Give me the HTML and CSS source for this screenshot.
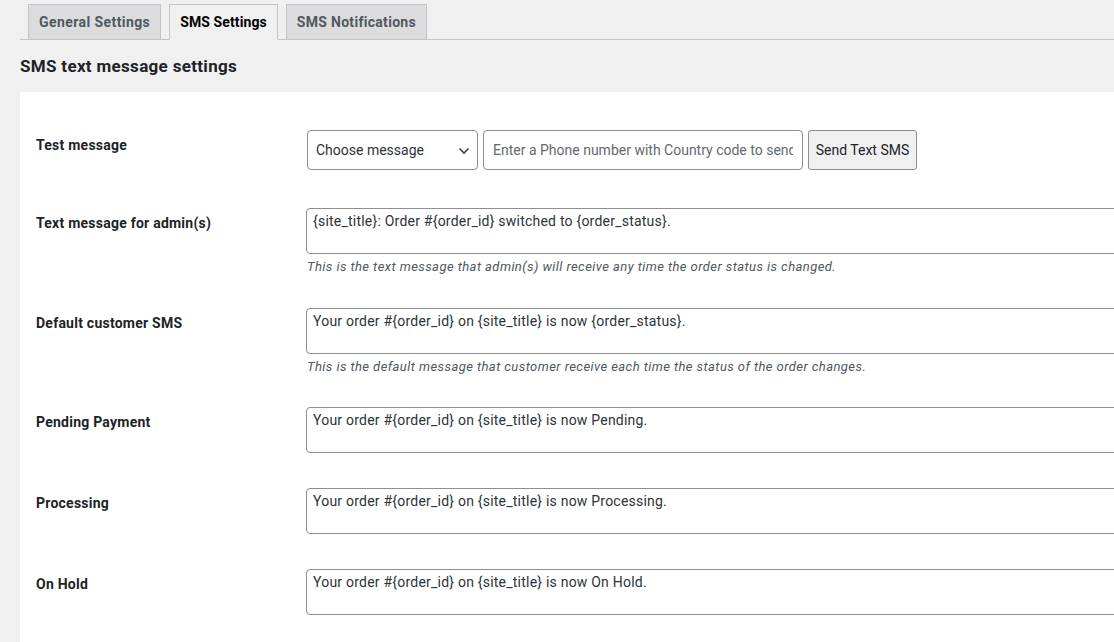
FILE: index.html
```html
<!DOCTYPE html>
<html lang="en">
<head>
<meta charset="utf-8">
<title>SMS Settings</title>
<link rel="stylesheet" href="styles.css">
</head>
<body>
<div class="wrap">
  <nav class="tabs">
    <a class="tab">General Settings</a>
    <a class="tab active">SMS Settings</a>
    <a class="tab tab-notify">SMS Notifications</a>
  </nav>
  <h2 class="heading">SMS text message settings</h2>
  <div class="panel">
    <table class="form-table">
      <tr class="row-test">
        <th>Test message</th>
        <td>
          <div class="controls">
            <div class="select-wrap">
              <select class="select"><option>Choose message</option></select>
              <svg class="chev" width="12" height="8" viewBox="0 0 12 8"><path d="M1.5 1.5 L6 6 L10.5 1.5" fill="none" stroke="#3c434a" stroke-width="1.6"/></svg>
            </div>
            <input class="phone" type="text" placeholder="Enter a Phone number with Country code to send">
            <button class="btn">Send Text SMS</button>
          </div>
        </td>
      </tr>
      <tr>
        <th>Text message for admin(s)</th>
        <td>
          <textarea class="msg">{site_title}: Order #{order_id} switched to {order_status}.</textarea>
          <p class="description">This is the text message that admin(s) will receive any time the order status is changed.</p>
        </td>
      </tr>
      <tr>
        <th>Default customer SMS</th>
        <td>
          <textarea class="msg">Your order #{order_id} on {site_title} is now {order_status}.</textarea>
          <p class="description">This is the default message that customer receive each time the status of the order changes.</p>
        </td>
      </tr>
      <tr>
        <th>Pending Payment</th>
        <td><textarea class="msg">Your order #{order_id} on {site_title} is now Pending.</textarea></td>
      </tr>
      <tr>
        <th>Processing</th>
        <td><textarea class="msg">Your order #{order_id} on {site_title} is now Processing.</textarea></td>
      </tr>
      <tr>
        <th>On Hold</th>
        <td><textarea class="msg">Your order #{order_id} on {site_title} is now On Hold.</textarea></td>
      </tr>
    </table>
  </div>
</div>
</body>
</html>
```
FILE: styles.css
```css
html, body {
  margin: 0;
  padding: 0;
  background: #f0f0f0;
  overflow: hidden;
  height: 642px;
}
body {
  font-family: Roboto, "Noto Sans", sans-serif;
  font-size: 14px;
  color: #1d2327;
}
.wrap {
  padding-left: 20px;
  height: 642px;
  overflow: hidden;
}
.tabs {
  display: flex;
  gap: 8px;
  padding: 4px 0 0 8px;
  border-bottom: 1px solid #c3c4c7;
  box-sizing: border-box;
  height: 40px;
}
.tab {
  display: block;
  box-sizing: border-box;
  height: 36px;
  padding: 0 10px;
  line-height: 34px;
  border: 1px solid #c3c4c7;
  background: #dcdcde;
  color: #50575e;
  font-weight: 700;
  font-size: 14px;
  letter-spacing: 0.42px;
  text-decoration: none;
}
.tab.active {
  background: #f0f0f0;
  color: #000;
  border-bottom-color: #f0f0f0;
  letter-spacing: 0.1px;
}
.tab.tab-notify {
  letter-spacing: 0.3px;
}
.heading {
  margin: 0;
  height: 52px;
  line-height: 53px;
  font-size: 17px;
  letter-spacing: 0.32px;
  font-weight: 700;
  color: #1d2327;
}
.panel {
  background: #fff;
  padding: 23px 0 0 16px;
  height: 600px;
}
.form-table {
  table-layout: fixed;
  width: 1200px;
  border-collapse: collapse;
  border-spacing: 0;
}
.form-table th {
  width: 261px;
  padding: 21px 10px 19px 0;
  text-align: left;
  vertical-align: top;
  font-weight: 700;
  line-height: 18px;
  font-size: 14px;
  letter-spacing: 0.24px;
  color: #1d2327;
}
.form-table td {
  padding: 15px 0 15px 0;
  vertical-align: top;
}
.controls {
  display: flex;
  height: 40px;
  margin-bottom: 8px;
}
.select-wrap {
  position: relative;
  width: 171px;
  height: 40px;
}
.select {
  appearance: none;
  -webkit-appearance: none;
  width: 171px;
  height: 40px;
  box-sizing: border-box;
  border: 1px solid #8c8f94;
  border-radius: 4px;
  background: #fff;
  padding: 0 24px 0 8px;
  font-family: inherit;
  font-size: 14px;
  color: #2c3338;
}
.chev {
  position: absolute;
  right: 8px;
  top: 17px;
  pointer-events: none;
}
.phone {
  margin-left: 5px;
  width: 320px;
  height: 40px;
  box-sizing: border-box;
  border: 1px solid #8c8f94;
  border-radius: 4px;
  padding: 0 9px;
  font-family: inherit;
  font-size: 14px;
  color: #2c3338;
}
.phone::placeholder {
  color: #646970;
}
.btn {
  margin-left: 5px;
  width: 109px;
  height: 40px;
  box-sizing: border-box;
  border: 1px solid #8c8f94;
  border-radius: 3px;
  background: #f0f0f1;
  font-family: inherit;
  font-size: 14px;
  color: #1d2327;
  padding: 0;
}
.msg {
  display: block;
  width: 860px;
  height: 46px;
  box-sizing: border-box;
  margin: 0 0 5px -1px;
  border: 1px solid #8c8f94;
  border-radius: 4px;
  padding: 2px 6px;
  font-family: inherit;
  font-size: 14px;
  letter-spacing: 0.22px;
  line-height: 20px;
  color: #2c3338;
  resize: none;
  overflow: hidden;
}
.description {
  margin: -1px 0 0;
  padding-bottom: 1.5px;
  font-size: 13px;
  letter-spacing: 0.43px;
  line-height: 18px;
  font-style: italic;
  color: #50575e;
}
```
